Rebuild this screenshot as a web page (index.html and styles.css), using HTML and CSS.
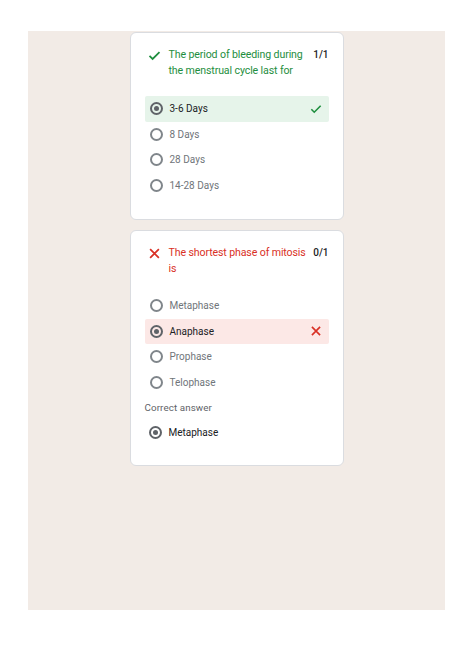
FILE: index.html
```html
<!DOCTYPE html>
<html lang="en">
<head>
<meta charset="utf-8">
<title>Quiz results</title>
<link rel="stylesheet" href="styles.css">
</head>
<body>
<div class="page">
  <section class="card">
    <div class="q-head correct">
      <svg class="q-icon" viewBox="0 0 24 24"><path d="M4 12.5l5 5L20 6.5" fill="none" stroke="currentColor" stroke-width="2.8"/></svg>
      <div class="q-title">The period of bleeding during the menstrual cycle last for</div>
      <div class="q-score">1/1</div>
    </div>
    <ul class="options">
      <li class="opt selected ok"><span class="radio on"></span><span class="label">3-6 Days</span>
        <svg class="mark green" viewBox="0 0 24 24"><path d="M4 12.5l5 5L20 6.5" fill="none" stroke="currentColor" stroke-width="2.8"/></svg></li>
      <li class="opt"><span class="radio"></span><span class="label">8 Days</span></li>
      <li class="opt"><span class="radio"></span><span class="label">28 Days</span></li>
      <li class="opt"><span class="radio"></span><span class="label">14-28 Days</span></li>
    </ul>
  </section>
  <section class="card card2">
    <div class="q-head wrong">
      <svg class="q-icon" viewBox="0 0 24 24"><path d="M5 5L19 19M19 5L5 19" fill="none" stroke="currentColor" stroke-width="2.8"/></svg>
      <div class="q-title">The shortest phase of mitosis is</div>
      <div class="q-score">0/1</div>
    </div>
    <ul class="options">
      <li class="opt"><span class="radio"></span><span class="label">Metaphase</span></li>
      <li class="opt selected bad"><span class="radio on"></span><span class="label">Anaphase</span>
        <svg class="mark red" viewBox="0 0 24 24"><path d="M5 5L19 19M19 5L5 19" fill="none" stroke="currentColor" stroke-width="2.8"/></svg></li>
      <li class="opt"><span class="radio"></span><span class="label">Prophase</span></li>
      <li class="opt"><span class="radio"></span><span class="label">Telophase</span></li>
    </ul>
    <div class="correct-label">Correct answer</div>
    <div class="opt answer"><span class="radio on"></span><span class="label">Metaphase</span></div>
  </section>
</div>
</body>
</html>
```
FILE: styles.css
```css
html, body {
  margin: 0;
  padding: 0;
  background: #ffffff;
}
body {
  font-family: Roboto, "Liberation Sans", sans-serif;
  color: #202124;
}
.page {
  margin: 31px 0 0 28px;
  width: 417px;
  height: 579px;
  background: #f2ebe6;
  display: flex;
  flex-direction: column;
  align-items: center;
  padding-top: 1px;
  box-sizing: border-box;
  gap: 10px;
}
.card {
  width: 214px;
  height: 188px;
  box-sizing: border-box;
  background: #ffffff;
  border: 1px solid #dadce0;
  border-radius: 6px;
  padding: 14px 14px 0 14px;
}
.card2 {
  height: 236px;
}
.q-head {
  display: flex;
  align-items: flex-start;
  font-size: 10.6px;
  line-height: 16px;
  letter-spacing: -0.12px;
}
.q-icon {
  width: 15px;
  height: 15px;
  flex: none;
  margin: 1px 7px 0 2px;
}
.q-head.correct { color: #1e8e3e; }
.q-head.wrong { color: #d93025; }
.q-title {
  flex: 1;
}
.q-score {
  flex: none;
  color: #202124;
  font-size: 10px;
  font-weight: 500;
  letter-spacing: 0;
  margin: 0 0 0 4px;
}
.options {
  list-style: none;
  margin: 17px 0 0 0;
  padding: 0;
}
.card2 .options {
  margin-top: 16px;
}
.opt {
  display: flex;
  align-items: center;
  height: 25.6px;
  padding: 0 6px 0 5px;
  font-size: 10px;
  color: #70757a;
  border-radius: 2px;
}
.opt.selected { color: #202124; }
.opt.ok { background: #e6f4ea; }
.opt.bad { background: #fce8e6; }
.radio {
  width: 13px;
  height: 13px;
  box-sizing: border-box;
  border: 2px solid #80868b;
  border-radius: 50%;
  flex: none;
  margin-right: 7px;
  position: relative;
}
.radio.on {
  border-color: #5f6368;
}
.radio.on::after {
  content: "";
  position: absolute;
  left: 2px;
  top: 2px;
  width: 5px;
  height: 5px;
  border-radius: 50%;
  background: #5f6368;
}
.label { flex: 1; }
.mark {
  width: 14px;
  height: 14px;
  flex: none;
}
.mark.green { color: #1e8e3e; }
.mark.red { color: #d93025; }
.correct-label {
  font-size: 9.8px;
  letter-spacing: 0.1px;
  color: #5f6368;
  margin-top: 6px;
  line-height: 14px;
}
.opt.answer {
  padding-left: 4px;
  color: #202124;
  margin-top: 4px;
}
```
